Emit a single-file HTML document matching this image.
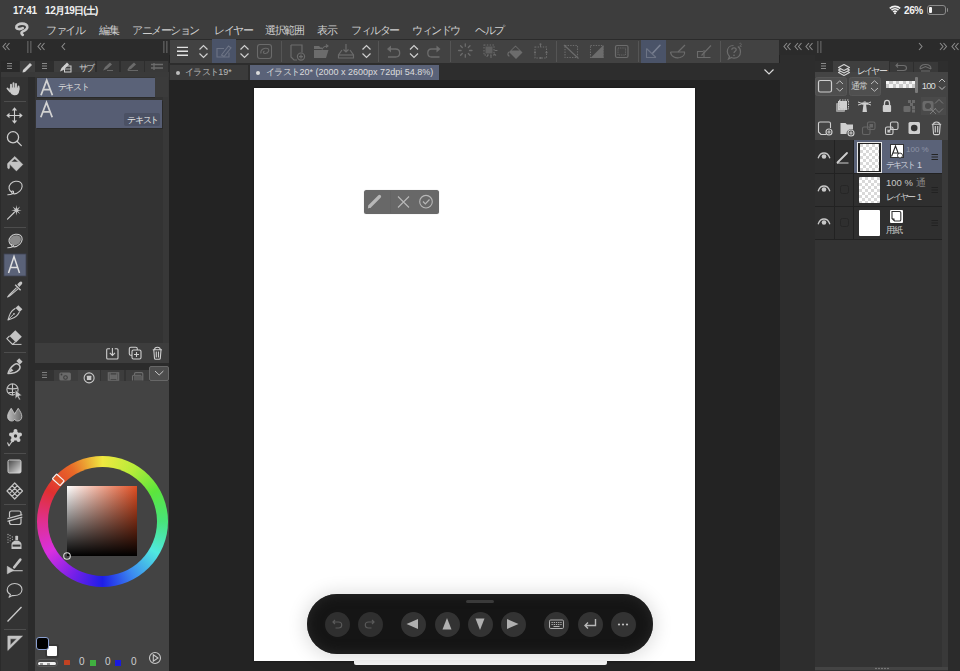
<!DOCTYPE html>
<html><head><meta charset="utf-8">
<style>
*{box-sizing:border-box;margin:0;padding:0}
html,body{width:960px;height:671px;overflow:hidden;background:#232323;font-family:"Liberation Sans",sans-serif;color:#d0d0d0}
.a{position:absolute}
svg{position:absolute;overflow:visible}
.t{position:absolute;white-space:nowrap;font-size:11px;line-height:12px}
.mn{position:absolute;top:24px;font-size:11px;line-height:12px;color:#cfcfcf;white-space:nowrap}
.sb{position:absolute;top:5px;font-size:10px;line-height:11px;font-weight:bold;color:#f2f2f2;white-space:nowrap;letter-spacing:-0.4px}
.jp{letter-spacing:0} i{display:inline-block;font-style:normal;text-align:center;letter-spacing:0}
.sep{position:absolute;top:41px;width:1px;height:21px;background:#555}
.tb{fill:none;stroke:#6c6c6c;stroke-width:1.2}
.ch{fill:none;stroke:#cfcfcf;stroke-width:1.2}
.tl{fill:none;stroke:#cccccc;stroke-width:1.3;stroke-linecap:round;stroke-linejoin:round}
.tf{fill:#cccccc}
</style></head><body>
<!-- ================= top status + menu ================= -->
<div class="a" style="left:0;top:0;width:960px;height:39px;background:#3d3d3d"></div>
<div class="sb" style="left:13px">17:41</div>
<div class="sb" style="left:45px">12<i style="width:8.8px">月</i>19<i style="width:8.8px">日</i>(<i style="width:8.8px">土</i>)</div>
<div class="sb" style="left:904px">26%</div>
<svg style="left:889px;top:5px" width="12" height="9" viewBox="0 0 12 9"><path d="M0.8 3.4 A7.6 7.6 0 0 1 11.2 3.4 M2.5 5.2 A5.1 5.1 0 0 1 9.5 5.2 M4.2 7 A2.6 2.6 0 0 1 7.8 7" fill="none" stroke="#f2f2f2" stroke-width="1.6"/><circle cx="6" cy="8.3" r="1" fill="#f2f2f2"/></svg>
<div class="a" style="left:927px;top:5px;width:19px;height:10px;border:1px solid #8a8a8a;border-radius:3px"></div>
<div class="a" style="left:929px;top:7px;width:3px;height:6px;background:#f5f5f5;border-radius:1px"></div>
<div class="a" style="left:946.5px;top:8px;width:1.5px;height:3.5px;background:#8a8a8a;border-radius:0 1px 1px 0"></div>
<svg style="left:0;top:0" width="40" height="40" viewBox="0 0 40 40"><path d="M22.8 28.2 C20 29.6 16.6 29.4 16.3 27.3 C16 25 19.3 23.6 22 23.6 C25.5 23.6 27.4 25.2 27.3 27.2 C27.2 29.5 24.3 30.8 22.2 31.8 C20.8 32.5 21.6 34 22.8 34.8" fill="none" stroke="#c8c8c8" stroke-width="2.6" stroke-linecap="round" stroke-linejoin="round"/></svg>
<div class="mn" style="left:46px"><i style="width:9.5px">フ</i><i style="width:9.5px">ァ</i><i style="width:9.5px">イ</i><i style="width:9.5px">ル</i></div>
<div class="mn" style="left:99px"><i style="width:9.5px">編</i><i style="width:9.5px">集</i></div>
<div class="mn" style="left:132px"><i style="width:9.5px">ア</i><i style="width:9.5px">ニ</i><i style="width:9.5px">メ</i><i style="width:9.5px">ー</i><i style="width:9.5px">シ</i><i style="width:9.5px">ョ</i><i style="width:9.5px">ン</i></div>
<div class="mn" style="left:214px"><i style="width:9.5px">レ</i><i style="width:9.5px">イ</i><i style="width:9.5px">ヤ</i><i style="width:9.5px">ー</i></div>
<div class="mn" style="left:265px"><i style="width:9.5px">選</i><i style="width:9.5px">択</i><i style="width:9.5px">範</i><i style="width:9.5px">囲</i></div>
<div class="mn" style="left:317px"><i style="width:9.5px">表</i><i style="width:9.5px">示</i></div>
<div class="mn" style="left:351px"><i style="width:9.5px">フ</i><i style="width:9.5px">ィ</i><i style="width:9.5px">ル</i><i style="width:9.5px">タ</i><i style="width:9.5px">ー</i></div>
<div class="mn" style="left:412px"><i style="width:9.5px">ウ</i><i style="width:9.5px">ィ</i><i style="width:9.5px">ン</i><i style="width:9.5px">ド</i><i style="width:9.5px">ウ</i></div>
<div class="mn" style="left:475px"><i style="width:9.5px">ヘ</i><i style="width:9.5px">ル</i><i style="width:9.5px">プ</i></div>

<!-- ================= collapse bar row ================= -->
<div class="a" style="left:0;top:39px;width:960px;height:16px;background:#2b2b2b"></div>
<svg style="left:0;top:39px" width="960" height="16" viewBox="0 0 960 16">
<g fill="none" stroke="#8a8a8a" stroke-width="1.1">
<path d="M6 4 L3 7.5 L6 11 M9.5 4 L6.5 7.5 L9.5 11"/>
<path d="M41 4 L38 7.5 L41 11 M44.5 4 L41.5 7.5 L44.5 11"/>
<path d="M65 4 L62 7.5 L65 11"/>
<path d="M787 4 L784 7.5 L787 11 M790.5 4 L787.5 7.5 L790.5 11"/>
<path d="M798 4 L795 7.5 L798 11 M801.5 4 L798.5 7.5 L801.5 11"/>
<path d="M809 4 L806 7.5 L809 11 M812.5 4 L809.5 7.5 L812.5 11"/>
<path d="M919 4 L922 7.5 L919 11"/>
<path d="M940 4 L943 7.5 L940 11 M943.5 4 L946.5 7.5 L943.5 11"/>
<path d="M955 4 L952 7.5 L955 11 M958.5 4 L955.5 7.5 L958.5 11"/>
</g>
<g fill="#555"><rect x="27" y="2" width="1.6" height="12"/><rect x="30" y="2" width="1.6" height="12"/>
<rect x="163" y="2" width="1.6" height="12"/><rect x="166" y="2" width="1.6" height="12"/>
<rect x="817" y="2" width="1.6" height="12"/><rect x="820" y="2" width="1.6" height="12"/></g>
</svg>
<!-- ================= toolbar ================= -->
<div class="a" style="left:170px;top:39.5px;width:609px;height:24px;background:#424242"></div>
<div class="a" style="left:212px;top:39px;width:24px;height:24px;background:#4a5368"></div>
<div class="a" style="left:641px;top:40px;width:25px;height:23px;background:#4a5368"></div>
<div class="sep" style="left:281px"></div>
<div class="sep" style="left:378px"></div>
<div class="sep" style="left:450px"></div>
<div class="sep" style="left:556px"></div>
<div class="sep" style="left:638px"></div>
<div class="sep" style="left:720px"></div>
<svg style="left:0;top:39px" width="780" height="24" viewBox="0 39 780 24">
<!-- hamburger -->
<g stroke="#e2e2e2" stroke-width="1.4"><path d="M177 47.4H188M177 51.2H188M177 55.2H188"/></g>
<!-- chevrons updown -->
<g class="ch">
<path d="M199.5 49.5 L203.5 45.5 L207.5 49.5 M199.5 53.5 L203.5 57.5 L207.5 53.5"/>
<path d="M240.5 49.5 L244.5 45.5 L248.5 49.5 M240.5 53.5 L244.5 57.5 L248.5 53.5"/>
<path d="M362.5 49.5 L366.5 45.5 L370.5 49.5 M362.5 53.5 L366.5 57.5 L370.5 53.5"/>
<path d="M410 49.5 L414 45.5 L418 49.5 M410 53.5 L414 57.5 L418 53.5"/>
</g>
<!-- highlighted pen-in-box icon -->
<g fill="none" stroke="#6d7485" stroke-width="1.1">
<path d="M224 48.5 H217 V57 H229 V52.5"/>
<path d="M221.5 55 L228.5 46 L231 47.8 L224 56.5 Z"/>
</g>
<!-- spiral -->
<g fill="none" stroke="#6a6a6a" stroke-width="1.1">
<rect x="257.5" y="44.5" width="14" height="14" rx="2.5"/>
<path d="M261 53.5 C260 50 264 47.5 267.5 48.5 C270 49.5 268.5 53 265.5 53.5 C263.5 53.8 262.5 52 264.5 51"/>
</g>
<!-- new doc -->
<g fill="none" stroke="#6c6c6c" stroke-width="1.2">
<path d="M291 45 H302 V52.5 M291 45 V57 L294 60 H297"/>
<circle cx="301" cy="56.6" r="3.6"/><path d="M299 56.6 H303 M301 54.6 V58.6"/>
</g>
<!-- folder -->
<g fill="#6c6c6c"><path d="M314 46 H319 L320.5 47.5 H322 V49 H314 Z"/><path d="M314 50 H328.5 L326 58 H314 Z"/></g>
<path d="M322 49.5 C323 47 325 46 327.5 46 M326 44.5 L328 46 L326 47.5" fill="none" stroke="#6c6c6c" stroke-width="1.1"/>
<!-- save tray -->
<g fill="none" stroke="#6c6c6c" stroke-width="1.2">
<path d="M342 50 L338.5 55 V58 H353.5 V55 L350 50"/><path d="M338.5 55 H353.5"/>
<path d="M346 44 V52 M343.5 49.5 L346 52 L348.5 49.5"/>
</g>
<!-- undo -->
<g fill="none" stroke="#6c6c6c" stroke-width="1.3">
<path d="M389 49 H395.5 C398 49 399.7 50.8 399.7 53 C399.7 55.2 398 57 395.5 57 H388"/>
</g>
<path d="M387 49 L391 45.5 V52.5 Z" fill="#6c6c6c"/>
<!-- redo -->
<g fill="none" stroke="#6c6c6c" stroke-width="1.3">
<path d="M438 49 H431.5 C429 49 427.8 50.8 427.8 53 C427.8 55.2 429 57 431.5 57 H439.5"/>
</g>
<path d="M440.5 49 L436.5 45.5 V52.5 Z" fill="#6c6c6c"/>
<!-- spinner -->
<g stroke="#6c6c6c" stroke-width="1.3" stroke-linecap="round">
<path d="M465.3 43.8V46.3M465.3 54.7V57.2M458.6 50.5H461.1M469.5 50.5H472M460.6 45.8L462.3 47.5M468.3 53.5L470 55.2M460.6 55.2L462.3 53.5M468.3 47.5L470 45.8"/>
</g>
<!-- dotted select -->
<g fill="none" stroke="#6c6c6c" stroke-width="1.1" stroke-dasharray="1.5 1.3">
<rect x="484" y="45" width="10" height="10"/>
</g>
<rect x="485.5" y="46.5" width="7" height="7" fill="#5f5f5f"/>
<g stroke="#6c6c6c" stroke-width="1.1" stroke-linecap="round"><path d="M495 50.5H497M494.2 54L495.7 55.2M491 55.5V57.5M487.8 55L487 56.5"/></g>
<!-- fill bucket -->
<path d="M509 52 L515.5 45.5 L522.5 52.5 L516 59 Z" fill="#6c6c6c"/>
<path d="M511.5 50.5 L515.5 46.8 L519.6 50.5 Z" fill="#424242"/>
<path d="M509 52 C507.5 53 507.5 56 509.5 56" fill="none" stroke="#6c6c6c" stroke-width="1.2"/>
<!-- transform -->
<g fill="none" stroke="#6c6c6c" stroke-width="1.1" stroke-dasharray="1.4 1.2"><rect x="535" y="47" width="11.5" height="11"/></g>
<g fill="#6c6c6c"><circle cx="540.5" cy="44.3" r="1"/><rect x="540" y="44.5" width="1" height="2.5"/><circle cx="535" cy="52.5" r="1.1"/><circle cx="546.5" cy="52.5" r="1.1"/><circle cx="540.7" cy="58" r="1.1"/></g>
<!-- dotted with slash -->
<g fill="none" stroke="#6c6c6c" stroke-width="1.1" stroke-dasharray="1.4 1.2"><rect x="565" y="45.5" width="12.5" height="12"/></g>
<path d="M564 45 L578.5 58.5" stroke="#6c6c6c" stroke-width="1.2"/>
<!-- dotted with triangle -->
<g fill="none" stroke="#6c6c6c" stroke-width="1.1" stroke-dasharray="1.4 1.2"><rect x="590.5" y="45.5" width="12.5" height="12"/></g>
<path d="M603.5 45 V58 H590.5 Z" fill="#6c6c6c"/>
<!-- frame -->
<rect x="615.5" y="45.5" width="12.5" height="12" rx="1.5" fill="none" stroke="#6c6c6c" stroke-width="1.2"/>
<rect x="618" y="48" width="7.5" height="7" fill="none" stroke="#6c6c6c" stroke-width="0.9" stroke-dasharray="1.2 1"/>
<!-- ruler highlighted -->
<g fill="none" stroke="#6d7485" stroke-width="1.1">
<path d="M646.5 48.5 V57.5 H656 M646.5 48.5 L656 57.5"/></g><path d="M652.8 53 L660 45.3" stroke="#7a8192" stroke-width="1.6" stroke-linecap="round"/>
<!-- ellipse ruler -->
<g fill="none" stroke="#6c6c6c" stroke-width="1.2"><path d="M670.5 52 C671 57 676 58.5 680 57.5 C683.5 56.5 685 54 684.5 52 H670.5"/><path d="M678 52 L685 45"/></g>
<!-- perspective ruler -->
<g fill="none" stroke="#6c6c6c" stroke-width="1.1"><path d="M697.5 51 V57.5 H710.5 M697.5 51.5 H703 M704 57.5 V50"/><path d="M701.5 55.5 L711 45.5"/></g>
<!-- help -->
<g fill="none" stroke="#6c6c6c" stroke-width="1.2">
<path d="M733.5 45.5 C729.5 45.5 727.3 48.3 727.3 51.5 C727.3 53.5 728 55 729.5 56.5 L728.5 59 L731.5 57.5 C732.5 58 733.5 58.2 734 58.2 C738 58.2 740.5 55.5 740.5 51.8 C740.5 49.5 739.5 47.5 737.8 46.5"/>
<path d="M731.8 49.8 C731.8 48.5 732.8 47.8 734 47.8 C735.3 47.8 736.2 48.6 736.2 49.7 C736.2 51.2 734 51.3 734 53"/>
</g>
<circle cx="734" cy="55.4" r="0.8" fill="#6c6c6c"/>
<path d="M739.5 43.5 C740.5 43 741.5 43.5 741.3 44.4 C741.2 45 740 45.3 739.8 46.3 H741.7" fill="none" stroke="#6c6c6c" stroke-width="0.8"/>
</svg>

<!-- ================= tabs row ================= -->
<div class="a" style="left:169px;top:63px;width:611px;height:17px;background:#2d2d2d"></div>
<div class="a" style="left:170px;top:65px;width:78px;height:15px;background:#3b3b3b"></div>
<div class="a" style="left:250px;top:65px;width:189px;height:15px;background:#5a6278"></div>
<div class="a" style="left:176px;top:71px;width:4px;height:4px;border-radius:50%;background:#bdbdbd"></div>
<div class="t" style="left:185px;top:67px;font-size:9px;line-height:10px;color:#b8b8b8"><span><i style="width:8.3px">イ</i><i style="width:8.3px">ラ</i><i style="width:8.3px">ス</i><i style="width:8.3px">ト</i></span>19*</div>
<div class="a" style="left:256px;top:71px;width:4px;height:4px;border-radius:50%;background:#dcdcdc"></div>
<div class="t" style="left:266px;top:67px;font-size:9px;line-height:10px;color:#dcdcdc"><span><i style="width:8.4px">イ</i><i style="width:8.4px">ラ</i><i style="width:8.4px">ス</i><i style="width:8.4px">ト</i></span>20* (2000 x 2600px 72dpi 54.8%)</div>
<svg style="left:764px;top:69px" width="10" height="6" viewBox="0 0 10 6"><path d="M0.5 0.5 L5 5 L9.5 0.5" fill="none" stroke="#d8d8d8" stroke-width="1.2"/></svg>

<!-- ================= canvas page ================= -->
<div class="a" style="left:254px;top:88.3px;width:441px;height:573px;background:#fff;box-shadow:0 0 2px rgba(0,0,0,0.45)"></div>
<!-- ================= left tool column ================= -->
<div class="a" style="left:0;top:55px;width:35px;height:616px;background:#2b2b2b"></div>
<div class="a" style="left:1px;top:61px;width:18px;height:11px;background:#292929"></div>
<div class="a" style="left:20px;top:61px;width:15px;height:11px;background:#3d3d3d"></div>
<div class="a" style="left:1px;top:72px;width:34px;height:5px;background:#393939"></div>
<div class="a" style="left:1px;top:77px;width:27px;height:594px;background:#333"></div>
<svg style="left:0;top:0" width="36" height="671" viewBox="0 0 36 671">
<g stroke="#8a8a8a" stroke-width="1"><path d="M7 63.5H12M7 66H12M7 68.5H12"/></g>
<path d="M23 70 L30 63 L32 65 L25 72 L22.5 72.5 Z" fill="#cfcfcf"/>
<!-- separators -->
<g fill="#4d4d4d"><rect x="4" y="101" width="22" height="1"/><rect x="4" y="227" width="22" height="1"/><rect x="4" y="352" width="22" height="1"/><rect x="4" y="453" width="22" height="1"/><rect x="4" y="504" width="22" height="1"/><rect x="4" y="629" width="22" height="1"/></g>
<!-- A highlight -->
<rect x="4" y="254" width="22" height="22" fill="#5a6278" stroke="#3f4454" stroke-width="0.8"/>
<g class="tf">
<!-- hand -->
<path d="M9.5 88.5 C9.5 90.5 10 94.5 14 95.3 C17.5 95.8 19 93.5 19.3 90.5 L19.5 87.5 L10 87.5 Z"/>
</g>
<g stroke="#c8c8c8" stroke-width="1.9" stroke-linecap="round" fill="none"><path d="M11 89 V84.8 M13.5 88 V83.3 M16 88 V84 M18.5 89.5 V86.5 M10 91.5 L7.5 88.5"/></g>
<path d="M14.8 156.5 L22.8 164.5 L16.4 170.9 L9.6 164.1 V167.5 C9.6 168.5 8.8 169 8.2 168.5 C7.6 168.1 7.6 167.3 7.6 166.5 V163.6 Z M14.8 158.7 L11 162 H18.5 Z" fill="#c4c4c4" fill-rule="evenodd" stroke="#c4c4c4" stroke-width="0.6" stroke-linejoin="round"/>
<g class="tl">
<!-- move -->
<path d="M14.5 108.5V122.5M7.5 115.5H21.5" stroke-width="1.1"/>
</g>
<g class="tf">
<path d="M14.5 107.3 L11.8 110.5 H17.2 Z M14.5 123.7 L11.8 120.5 H17.2 Z M6.3 115.5 L9.5 112.8 V118.2 Z M22.7 115.5 L19.5 112.8 V118.2 Z"/>
</g>
<g class="tl">
<!-- zoom -->
<circle cx="13" cy="137.3" r="5.6"/><path d="M17 141.3 L21.3 145.6"/>
<!-- lasso -->
<path d="M11.8 192.2 C8.6 190.6 8 186.5 10.8 183.6 C13.2 181.1 17.8 180.4 20.5 182.4 C23 184.4 22.6 188.6 19.8 191.1 C17.3 193.4 14 194.2 12.4 193.3 C11.2 192.6 11.6 190.9 12.8 191 C14 191.2 13.9 193 12.5 193.8 C11.2 194.6 9.3 194.8 7.8 194.8" stroke-width="1.1"/>
<!-- wand -->
<path d="M7.5 219.2 L14.2 212.5" stroke-width="1.1"/>
<path d="M16.40 205.00 L17.05 208.73 L20.15 206.55 L17.97 209.65 L21.70 210.30 L17.97 210.95 L20.15 214.05 L17.05 211.87 L16.40 215.60 L15.75 211.87 L12.65 214.05 L14.83 210.95 L11.10 210.30 L14.83 209.65 L12.65 206.55 L15.75 208.73 Z" fill="#c4c4c4" stroke="none"/>
<!-- lasso fill -->
<path d="M11.8 245.2 C8.6 243.6 8 239.5 10.8 236.6 C13.2 234.1 17.8 233.4 20.5 235.4 C23 237.4 22.6 241.6 19.8 244.1 C17.3 246.4 14 247.2 12.4 246.3 C11.2 245.6 11.6 243.9 12.8 244 C14 244.2 13.9 246 12.5 246.8 C11.2 247.6 9.3 247.8 7.8 247.8" stroke-width="1.1"/>
</g>
<path d="M12 244.3 C9.3 242.8 9 239.5 11.3 237.3 C13.5 235.2 17.5 234.6 19.6 236.3 C21.6 238 21.3 241.3 19 243.4 C17 245.2 14.5 245.5 13.2 244.9 Z" fill="#8a8a8a"/>
<!-- A text tool -->
<path d="M8.5 273 L14 256.5 L19.5 273 M10.5 267.5 H17.5" fill="none" stroke="#e0e0e0" stroke-width="1.5"/>
<!-- eyedropper -->
<path d="M17.3 284.3 L19.6 282 C20.5 281.1 21.9 281.3 22.2 282.5 C22.4 283.4 22 284.2 21.4 284.8 L19.2 287 Z" fill="#c4c4c4"/>
<path d="M15.2 284.8 L20.6 290.2" stroke="#c4c4c4" stroke-width="1.4"/>
<path d="M16.6 287.6 L10.2 294 C9.2 295 8.2 296.2 7.6 297 C8.6 296.6 10 295.6 11 294.8 L18 288.9" fill="none" stroke="#c4c4c4" stroke-width="1.1" stroke-linejoin="round"/>
<!-- pen -->
<path d="M18.3 305.2 L22.4 309.3 L19.6 312.1 L15.5 308 Z" fill="#c4c4c4"/>
<path d="M15.5 308.2 C12.4 310 10.3 312.8 9.3 315.8 L8 319.9 L12 318.6 C15 317.6 17.8 315.3 19.4 312" fill="none" stroke="#c4c4c4" stroke-width="1.1" stroke-linejoin="round"/>
<path d="M8.3 319.6 L13.5 314.3" stroke="#c4c4c4" stroke-width="1"/>
<circle cx="14" cy="313.8" r="0.9" fill="#c4c4c4"/>
<!-- eraser -->
<path d="M15.3 330.2 L21.8 336.7 L16 342.5 L9.5 336 Z" fill="#c4c4c4"/>
<path d="M9.5 336 L6.8 338.7 L12.6 344.5 L15.3 341.8" fill="none" stroke="#c4c4c4" stroke-width="1.1" stroke-linejoin="round"/>
<path d="M12.6 344.4 H21.5" stroke="#c4c4c4" stroke-width="1"/>
<!-- pen2 -->
<path d="M19.2 358.3 L22.6 361.7 L19.8 364.5 L16.4 361.1 Z" fill="#c4c4c4"/>
<path d="M8 373.6 C9 369.8 11.2 366.8 14 364.8 C15.6 363.7 17.3 363.6 18.3 364.3 L19.6 365.6 C20.3 366.6 20.1 368.3 19 369.8 C16.8 372.6 12.8 373.6 8 373.6 Z" fill="none" stroke="#c4c4c4" stroke-width="1.5" stroke-linejoin="round"/>
<path d="M8 373.6 L13.5 370.5 L11.2 368.5 Z" fill="#c4c4c4"/>
<!-- 3d cursor -->
<g fill="none" stroke="#c4c4c4" stroke-width="1.1">
<circle cx="12.5" cy="389.5" r="5.6"/>
<path d="M12.5 384 V395 M7.2 388 C9 389.2 16 389.2 17.8 388 M8.5 392.5 H15"/>
</g>
<path d="M15.2 389.8 L22 395.6 L18.9 396.1 L20.6 399.4 L19.1 400.1 L17.4 396.8 L15.2 398.9 Z" fill="#c4c4c4" stroke="#333" stroke-width="0.6"/>
<!-- drops -->
<defs><linearGradient id="gd" x1="0" y1="0" x2="1" y2="0"><stop offset="0" stop-color="#bdbdbd"/><stop offset="0.6" stop-color="#8a8a8a"/><stop offset="1" stop-color="#666"/></linearGradient></defs><path d="M11.2 408.3 C9.2 411.2 7.6 413.8 7.6 416.5 C7.6 419.3 9.5 421 11.7 421 C13.2 421 14.2 420.3 14.6 419.3 C15 420.3 16.2 421 17.7 421 C20 421 21.8 419.3 21.8 416.5 C21.8 413.8 20.2 411.2 18.2 408.3 C16.7 410.8 15.2 412.8 14.7 414.3 C14.2 412.8 12.7 410.8 11.2 408.3 Z" fill="url(#gd)" stroke="#c4c4c4" stroke-width="0.9"/>
<!-- flower -->
<circle cx="15.5" cy="436" r="4.5" fill="#cccccc"/>
<g fill="#cccccc"><circle cx="15.5" cy="431" r="2"/><circle cx="20" cy="434.5" r="2"/><circle cx="18.5" cy="440" r="2"/><circle cx="12.5" cy="440" r="2"/><circle cx="11" cy="434.5" r="2"/></g>
<circle cx="15.5" cy="436" r="1.7" fill="#333"/>
<path d="M9 446 L10.5 443.5 C11.5 441.5 13 441 14 440.5 M9 446 L7.5 442.5" fill="none" stroke="#cccccc" stroke-width="1.1"/>
<!-- gradient -->
<defs><linearGradient id="g1" x1="0" y1="0" x2="1" y2="1"><stop offset="0" stop-color="#444"/><stop offset="1" stop-color="#e0e0e0"/></linearGradient></defs>
<rect x="8" y="460" width="13" height="13" rx="1.5" fill="url(#g1)" stroke="#cccccc" stroke-width="1"/>
<!-- pattern -->
<path d="M14.7 483 L22.5 491 L14.7 499 L7 491 Z M9.57 488.33 L17.30 496.33 M12.13 496.33 L19.90 488.33 M12.13 485.67 L19.90 493.67 M9.57 493.67 L17.30 485.67" fill="none" stroke="#c4c4c4" stroke-width="1.2" stroke-linejoin="round"/>
<!-- frame -->
<g fill="none" stroke="#c4c4c4" stroke-width="1.2">
<path d="M9.5 517 V513 C9.5 511.9 10.4 511 11.5 511 H19 C20.1 511 21 511.9 21 513 V515.2"/>
<path d="M9.5 520 V522.5 C9.5 523.6 10.4 524.5 11.5 524.5 H19 C20.1 524.5 21 523.6 21 522.5 V518.3"/>
<path d="M7.5 518.7 L22.3 514.6 M7.5 521.3 L22.3 517.2"/>
</g>
<!-- spray -->
<path d="M11.5 549 V544.8 C11.5 542.3 13.8 540.6 16.5 540.6 C19.2 540.6 21.5 542.3 21.5 544.8 V549 Z" fill="#c4c4c4"/>
<rect x="12.6" y="544.6" width="7.8" height="2" fill="#333"/>
<rect x="15.3" y="535.8" width="2.8" height="4.2" rx="0.6" fill="#c4c4c4"/>
<g fill="#a8a8a8"><circle cx="8" cy="534.5" r="0.65"/><circle cx="10" cy="535.5" r="0.65"/><circle cx="12.3" cy="537" r="0.65"/><circle cx="8" cy="537.2" r="0.65"/><circle cx="10.2" cy="538.3" r="0.65"/><circle cx="12.5" cy="539.3" r="0.65"/><circle cx="8" cy="539.8" r="0.65"/><circle cx="10.2" cy="540.8" r="0.65"/><circle cx="8" cy="542.3" r="0.65"/></g>
<!-- brush -->
<path d="M14.2 567.3 L20.3 559.6" stroke="#c4c4c4" stroke-width="2.6" stroke-linecap="round"/>
<path d="M7.3 566.3 L13.8 570.2 L7.3 573.8 Z" fill="#c4c4c4" stroke="#c4c4c4" stroke-width="0.6" stroke-linejoin="round"/>
<path d="M11 570.7 H22.7" stroke="#c4c4c4" stroke-width="1.1"/>
<!-- bubble -->
<path d="M10.5 594.6 C7.8 593.3 7.2 591.3 7.2 589.8 C7.2 586.2 10.5 583.5 14.7 583.5 C18.9 583.5 22 586.2 22 589.6 C22 593 18.9 595.5 14.7 595.5 L12.3 595.6 L9 597.2 Z" fill="none" stroke="#c4c4c4" stroke-width="1.1" stroke-linejoin="round"/>
<!-- line -->
<path d="M7.5 621.5 L21.5 607" stroke="#cccccc" stroke-width="1.3"/>
<!-- triangle ruler -->
<path d="M7.8 636 H22.5 L7.8 650.5 Z M10.3 638.8 V645.2 L16.8 638.8 Z" fill="#c4c4c4" fill-rule="evenodd" stroke="#c4c4c4" stroke-width="0.5" stroke-linejoin="round"/>
</svg>
<!-- ================= sub tool panel ================= -->
<div class="a" style="left:35px;top:55px;width:134px;height:308px;background:#333333"></div>
<div class="a" style="left:35px;top:55px;width:134px;height:6px;background:#2b2b2b"></div>
<div class="a" style="left:35px;top:61px;width:134px;height:11px;background:#2e2e2e"></div>
<div class="a" style="left:54px;top:61px;width:41px;height:12px;background:#3e3e3e"></div>
<div class="a" style="left:97px;top:61px;width:22px;height:10.5px;background:#393939"></div>
<div class="a" style="left:121px;top:61px;width:23px;height:10.5px;background:#393939"></div>
<div class="a" style="left:145px;top:61px;width:23px;height:10.5px;background:#393939"></div>
<div class="a" style="left:35px;top:72px;width:134px;height:5px;background:#3a3a3a"></div>
<div class="a" style="left:163px;top:77px;width:6px;height:266px;background:#383838"></div>
<!-- item 1 -->
<div class="a" style="left:155px;top:77px;width:13px;height:20px;background:#3b3b3b"></div>
<div class="a" style="left:37px;top:78px;width:118px;height:19px;background:#5a6278;box-shadow:0 1px 0 #2a2a2a"></div>
<svg style="left:0;top:0" width="170" height="380" viewBox="0 0 170 380">
<g stroke="#8a8a8a" stroke-width="1"><path d="M42 63.5H47M42 66H47M42 68.5H47"/></g>
<!-- sub tab icon -->
<path d="M60 71.5 L61.5 68 L67 62.5 L69 64.5 L63.5 70 Z" fill="#cfcfcf"/>
<rect x="64.5" y="66" width="6.5" height="6" fill="none" stroke="#cfcfcf" stroke-width="1"/>
<path d="M64.5 69 H71" stroke="#cfcfcf" stroke-width="0.8"/>
<g fill="#6b6b6b">
<path d="M103 70.5 L105 67 L110 62.5 L112 64.5 L107 69 Z"/><path d="M107 70.5 H113" stroke="#6b6b6b" stroke-width="0.9"/>
<path d="M127 70.5 L129 67 L134 62.5 L136 64.5 L131 69 Z"/><path d="M128 70.5 H138" stroke="#6b6b6b" stroke-width="0.9"/>
</g>
<g stroke="#6b6b6b" stroke-width="1.3" fill="none"><path d="M151 64.5 H163 M151 68 H163 M154 63 V70"/></g>
<!-- big A 1 -->
<path d="M41 95.2 L46.7 80.3 L52.4 95.2 M43.1 89.7 H50.3" fill="none" stroke="#d2d2d2" stroke-width="1.75"/>
</svg>
<div class="t" style="left:57.5px;top:82px;font-size:9px;line-height:10px;color:#dedede"><i style="width:7.8px">テ</i><i style="width:7.8px">キ</i><i style="width:7.8px">ス</i><i style="width:7.8px">ト</i></div>
<div class="t" style="left:79px;top:63px;font-size:9px;line-height:10px;color:#cfcfcf"><i style="width:7.3px">サ</i><i style="width:7.3px">ブ</i></div>
<!-- item 2 -->
<div class="a" style="left:36px;top:100px;width:126px;height:28px;background:#565d73;box-shadow:1px 1px 0 #2a2a2a"></div>
<svg style="left:0;top:0" width="170" height="130" viewBox="0 0 170 130"><path d="M40.8 117.3 L46.5 102.5 L52.2 117.3 M42.9 111.8 H50.1" fill="none" stroke="#d2d2d2" stroke-width="1.75"/></svg>
<div class="a" style="left:124px;top:113px;width:36px;height:13px;background:#4b5164;border-radius:2px"></div>
<div class="t" style="left:127px;top:115px;font-size:9px;line-height:10px;color:#e6e6e6"><i style="width:7.8px">テ</i><i style="width:7.8px">キ</i><i style="width:7.8px">ス</i><i style="width:7.8px">ト</i></div>
<!-- bottom bar -->
<div class="a" style="left:35px;top:343px;width:134px;height:20px;background:#3d3d3d"></div>
<svg style="left:0;top:0" width="170" height="380" viewBox="0 0 170 380">
<g fill="none" stroke="#cfcfcf" stroke-width="1.1">
<path d="M110 348.7 H107.7 C107 348.7 106.7 349 106.7 349.7 V358 C106.7 358.7 107 359 107.7 359 H117 C117.7 359 118 358.7 118 358 V349.7 C118 349 117.7 348.7 117 348.7 H114.7"/>
<path d="M112.4 348 V355.5 M109.8 352.8 L112.4 355.5 L115 352.8"/>
<rect x="129.3" y="347.3" width="8" height="8" rx="1.5"/>
<rect x="132" y="350" width="9" height="9" rx="1.5" fill="#3d3d3d"/>
<path d="M136.5 352 V357 M134 354.5 H139"/>
<path d="M152.8 349.8 H162 M154.5 349.8 C154.5 348 155.5 347.3 157.4 347.3 C159.3 347.3 160.3 348 160.3 349.8 M153.8 350 L154.5 358.3 C154.6 358.9 155 359.2 155.6 359.2 H159.2 C159.8 359.2 160.2 358.9 160.3 358.3 L161 350 M156.3 351.5 V357.5 M158.5 351.5 V357.5"/>
</g>
</svg>

<!-- ================= color panel ================= -->
<div class="a" style="left:35px;top:363px;width:134px;height:7px;background:#2b2b2b"></div>
<div class="a" style="left:35px;top:370px;width:134px;height:301px;background:#434343"></div>
<div class="a" style="left:35px;top:370px;width:134px;height:11px;background:#333333"></div>
<div class="a" style="left:54px;top:370px;width:23.8px;height:11px;background:#3d3d3d"></div>
<div class="a" style="left:78px;top:370px;width:22px;height:11px;background:#434343"></div>
<div class="a" style="left:101px;top:370px;width:23px;height:11px;background:#3d3d3d"></div>
<div class="a" style="left:126px;top:370px;width:23px;height:11px;background:#3d3d3d"></div>
<div class="a" style="left:149.4px;top:366px;width:19.3px;height:14.7px;background:#4d4d4d;border:1px solid #676767;border-radius:2px"></div>
<svg style="left:0;top:0" width="170" height="671" viewBox="0 0 170 671">
<g stroke="#808080" stroke-width="1"><path d="M42 372.5H47M42 375H47M42 377.5H47"/></g>
<!-- tab icons -->
<g fill="none" stroke="#6e6e6e" stroke-width="1.1">
<rect x="59.3" y="372.5" width="11.6" height="8" rx="1.5" fill="#6a6a6a" stroke="none"/><circle cx="65.5" cy="377.5" r="1.8" stroke="#3d3d3d"/><circle cx="61.5" cy="374.5" r="0.9" fill="#3d3d3d" stroke="none"/>
<rect x="110" y="374.5" width="7" height="4.5" fill="#666" stroke="none"/><path d="M108.3 372.8 H118.7 V380.3 H108.3 Z M110 372.8 V380.3 M117 372.8 V380.3"/>
<rect x="134" y="375.5" width="8.5" height="5" fill="#5a5a5a" stroke="none"/><path d="M132.5 380.5 V376.5 C132.5 375.8 133 375.3 133.7 375.3 H141 M134.5 375.3 V373.8 C134.5 373 135 372.6 135.8 372.6 H141.5 C142.3 372.6 142.8 373 142.8 373.8 V380.5"/>
</g>
<circle cx="89.1" cy="377.9" r="5" fill="none" stroke="#c8c8c8" stroke-width="1.1"/>
<rect x="86.9" y="375.7" width="4.4" height="4.4" rx="0.5" fill="#c8c8c8"/>
<path d="M155 371 L159.2 375 L163.4 371" fill="none" stroke="#c8c8c8" stroke-width="1"/>
</svg>
<!-- color wheel -->
<div class="a" style="left:36.5px;top:455.5px;width:131px;height:131px;border-radius:50%;background:conic-gradient(from 0deg,#f0e840 0deg,#b8ec3a 30deg,#5ce43c 60deg,#48e47a 90deg,#50e8e0 120deg,#3c8cf0 150deg,#1e1ee8 180deg,#7a20e8 210deg,#d830e0 240deg,#e03090 270deg,#e03030 300deg,#e86a28 330deg,#f0e840 360deg)"></div>
<div class="a" style="left:47.5px;top:466.5px;width:109px;height:109px;border-radius:50%;background:#434343"></div>
<div class="a" style="left:67px;top:486px;width:70px;height:70px;background:linear-gradient(to bottom,rgba(0,0,0,0),#000),linear-gradient(to right,#fff,#e04e22)"></div>
<svg style="left:0;top:0" width="170" height="671" viewBox="0 0 170 671">
<circle cx="67" cy="556" r="3.3" fill="none" stroke="#d8d8d8" stroke-width="1.1"/>
<g transform="translate(58.3 479.8) rotate(-48)"><rect x="-3.2" y="-5.2" width="6.4" height="10.4" rx="0.8" fill="#e0552a" stroke="#f4f4f4" stroke-width="1.2"/></g>
</svg>
<!-- bottom swatches -->
<div class="a" style="left:44.5px;top:643.7px;width:14px;height:14px;background:#fff;border:2px solid #393939;border-radius:3px"></div>
<div class="a" style="left:36.2px;top:636.7px;width:13px;height:13.3px;background:#000;border:1.7px solid #8a9fd0;border-radius:3px"></div>
<div class="a" style="left:35.8px;top:659.2px;width:22.5px;height:8.3px;border:1px solid #5a5a5a;border-radius:4px;background:#434343"></div>
<div class="a" style="left:38px;top:661.8px;width:17.5px;height:3.6px;background:#f0f0f0;border-radius:1.5px"></div>
<div class="a" style="left:40px;top:662.6px;width:3px;height:2px;background:#9a9a9a"></div>
<div class="a" style="left:47px;top:662.6px;width:3px;height:2px;background:#9a9a9a"></div>
<div class="a" style="left:64.2px;top:659.6px;width:5.4px;height:5.2px;background:#c24222;border-radius:0.5px"></div>
<div class="a" style="left:90px;top:659.5px;width:6px;height:6px;background:#40b040"></div>
<div class="a" style="left:115px;top:659.5px;width:6px;height:6px;background:#1a1ae0"></div>
<div class="t" style="left:79px;top:657px;font-size:10px;line-height:10px;color:#cfcfcf">0</div>
<div class="t" style="left:105px;top:657px;font-size:10px;line-height:10px;color:#cfcfcf">0</div>
<div class="t" style="left:131px;top:657px;font-size:10px;line-height:10px;color:#cfcfcf">0</div>
<svg style="left:149px;top:652px" width="12" height="12" viewBox="0 0 12 12"><circle cx="6" cy="6" r="5.5" fill="none" stroke="#c8c8c8" stroke-width="1.1"/><path d="M4.3 2.8 L9 6 L4.3 9.2 Z" fill="none" stroke="#c8c8c8" stroke-width="1.1"/></svg>
<!-- ================= right collapse column + layer panel ================= -->
<div class="a" style="left:780px;top:55px;width:35px;height:616px;background:#2d2d2d"></div>
<div class="a" style="left:948px;top:55px;width:12px;height:616px;background:#2b2b2b"></div>
<div class="a" style="left:815px;top:55px;width:133px;height:6px;background:#2b2b2b"></div>
<div class="a" style="left:815px;top:61px;width:133px;height:11px;background:#2e2e2e"></div>
<div class="a" style="left:833px;top:61px;width:56px;height:12px;background:#3f3f3f"></div>
<div class="a" style="left:890px;top:61.5px;width:23px;height:10px;background:#393939"></div>
<div class="a" style="left:914px;top:61.5px;width:23.5px;height:10px;background:#393939"></div>
<div class="a" style="left:815px;top:72px;width:133px;height:68px;background:#444444"></div>
<div class="a" style="left:815px;top:76.5px;width:32px;height:19px;background:#4f4f4f;border:1px solid #565656;border-radius:2.5px"></div>
<div class="a" style="left:849px;top:76.5px;width:32px;height:19px;background:#4f4f4f;border:1px solid #565656;border-radius:2.5px"></div>
<div class="a" style="left:921px;top:97px;width:25px;height:18px;background:#4a4a4a"></div>
<div class="a" style="left:886px;top:81px;width:28.5px;height:6.5px;background:linear-gradient(#fff,#fff) 0 0/100% 0,repeating-linear-gradient(90deg,#f4f4f4 0 3.3px,#c9c9c9 3.3px 6.6px)"></div>
<div class="a" style="left:886px;top:84.25px;width:28.5px;height:3.25px;background:repeating-linear-gradient(90deg,#c9c9c9 0 3.3px,#f4f4f4 3.3px 6.6px)"></div>
<div class="a" style="left:914.5px;top:76.5px;width:3.5px;height:16px;background:#7a7a7a;border-radius:1px"></div>
<div class="t" style="left:921.8px;top:80.5px;font-size:9.5px;line-height:10px;color:#dcdcdc;letter-spacing:-0.9px">100</div>
<div class="t" style="left:856.5px;top:66px;font-size:9px;line-height:10px;color:#dadada"><i style="width:7.4px">レ</i><i style="width:7.4px">イ</i><i style="width:7.4px">ヤ</i><i style="width:7.4px">ー</i></div>
<div class="t" style="left:851px;top:81px;font-size:9px;line-height:10px;color:#cfcfcf"><i style="width:7.7px">通</i><i style="width:7.7px">常</i></div>
<svg style="left:0;top:0" width="960" height="671" viewBox="0 0 960 671">
<g stroke="#8a8a8a" stroke-width="1"><path d="M821 63.5H826M821 66H826M821 68.5H826"/></g>
<!-- layers icon -->
<g fill="#3f3f3f" stroke="#d4d4d4" stroke-width="1.1" stroke-linejoin="round">
<path d="M838.5 72.5 L844 75.5 L849.5 72.5 L844 69.5 Z"/>
<path d="M838.5 70 L844 73 L849.5 70 L844 67 Z"/>
<path d="M838.5 67.5 L844 70.5 L849.5 67.5 L844 64.5 Z"/>
</g>
<g fill="none" stroke="#6e6e6e" stroke-width="1.1">
<path d="M896 65.5 H903.5 C905.5 65.5 906.5 66.7 906.5 68 C906.5 69.3 905.5 70.5 903.5 70.5 H897 M898 63.5 L896 65.5 L898 67.5"/>
<path d="M920 69 C920 66 922.5 64.5 925.5 64.5 C928.5 64.5 931 66 931 69 M920 69 L925.5 66.5 L931 69 M921 71 H930"/>
</g>
<!-- prop row1 -->
<rect x="818.5" y="80.5" width="13" height="11.5" rx="1.8" fill="none" stroke="#cfcfcf" stroke-width="1.2"/>
<g fill="none" stroke="#bdbdbd" stroke-width="1">
<path d="M836.5 84 L839.7 80.8 L843 84 M836.5 88 L839.7 91.2 L843 88"/>
<path d="M871 84 L874.5 80.8 L878 84 M871 88 L874.5 91.2 L878 88"/>
<path d="M939 82 L942 79 L945 82 M939 86.5 L942 89.5 L945 86.5"/>
</g>
<!-- row2 icons -->
<g fill="#9a9a9a"><rect x="836" y="103" width="9" height="9" rx="1"/></g>
<rect x="838" y="101" width="9" height="9" fill="#cfcfcf"/>
<rect x="839.5" y="100" width="9" height="9" fill="none" stroke="#bdbdbd" stroke-width="1" stroke-dasharray="1.5 1"/>
<g fill="#cfcfcf">
<path d="M862.5 112 L863.5 104 H866 L867 112 Z"/><rect x="861.5" y="102.5" width="6.5" height="2.2"/><path d="M863 102.5 C863 101 866.5 101 866.5 102.5 Z"/>
<path d="M858 102 L862 103.5 M871 102 L867.5 103.5 M858 105 L861.5 104 M871 105 L868 104" stroke="#cfcfcf" stroke-width="1"/>
<rect x="882.8" y="105" width="8.3" height="7" rx="1"/>
</g>
<path d="M884.5 105 V103 C884.5 101.3 885.5 100.3 887 100.3 C888.5 100.3 889.5 101.3 889.5 103 V105" fill="none" stroke="#cfcfcf" stroke-width="1.3"/>
<g fill="#6a6a6a"><rect x="903.5" y="106" width="7" height="6" rx="1"/><rect x="908" y="100" width="3" height="3"/><rect x="912" y="100" width="3" height="3"/><rect x="910" y="103" width="3" height="3"/><rect x="912" y="106" width="3" height="3"/><rect x="912" y="109.5" width="3" height="3"/></g>
<g><rect x="922.5" y="101" width="11" height="10" rx="2" fill="#6a6a6a"/><circle cx="928" cy="106" r="3" fill="#4a4a4a"/></g>
<g fill="none" stroke="#7a7a7a" stroke-width="1"><path d="M935 103.5 L939 99.5 L943 103.5 M935 108.5 L939 112.5 L943 108.5 M930 108 L936 114 M936 108 L930 114"/></g>
<!-- row3 icons -->
<g fill="none" stroke="#cfcfcf" stroke-width="1.1">
<path d="M830.5 128 V123.5 C830.5 122.5 830 122 829 122 H820 C819 122 818.5 122.5 818.5 123.5 V132 L821 134.5 H826"/>
<circle cx="829" cy="132" r="3"/><path d="M827.3 132 H830.7 M829 130.3 V133.7"/>
</g>
<path d="M840.5 123 H845.5 L847 124.5 H853 V129.5 C852.5 129.3 852 129.2 851 129.2 C848.5 129.2 846.5 131 846.5 133.5 V134 H840.5 Z" fill="#cfcfcf"/>
<g fill="none" stroke="#cfcfcf" stroke-width="1.1"><circle cx="851" cy="133" r="3"/><path d="M849.3 133 H852.7 M851 131.3 V134.7"/></g>
<g fill="none" stroke="#666" stroke-width="1.1"><rect x="862.5" y="127" width="7.5" height="7.5" rx="1.5"/><rect x="867.5" y="122" width="7.5" height="7.5" rx="1.5"/><rect x="869.5" y="124" width="3.5" height="3.5" fill="#666" stroke="none"/></g>
<g fill="none" stroke="#cfcfcf" stroke-width="1.1"><rect x="885.5" y="127" width="7.5" height="7.5" rx="1.5"/><rect x="890.5" y="122" width="7.5" height="7.5" rx="1.5"/><path d="M888 132 L891.5 128.5 M888 129.5 V132 H890.5"/></g>
<rect x="908.5" y="122" width="11.5" height="12" rx="1.5" fill="#cfcfcf"/>
<circle cx="914.2" cy="128" r="3.3" fill="#333"/>
<g fill="none" stroke="#cfcfcf" stroke-width="1.1"><path d="M931.8 124.3 H941.2 M933.5 124.3 C933.5 122.8 934.5 122 936.5 122 C938.5 122 939.5 122.8 939.5 124.3 M932.8 124.5 L933.5 133.5 C933.6 134.2 934 134.6 934.7 134.6 H938.3 C939 134.6 939.4 134.2 939.5 133.5 L940.2 124.5 M935.3 126 V132.5 M937.7 126 V132.5"/></g>
</svg>
<!-- layer list -->
<div class="a" style="left:815px;top:140px;width:133px;height:531px;background:#333333"></div>
<div class="a" style="left:942px;top:140px;width:6px;height:527px;background:#393939"></div>
<div class="a" style="left:815px;top:140px;width:127px;height:99.5px;background:#2f2f2f"></div>
<div class="a" style="left:854px;top:140px;width:88px;height:33px;background:#5a6278"></div>
<div class="a" style="left:815px;top:173px;width:127px;height:1px;background:#222"></div>
<div class="a" style="left:815px;top:206px;width:127px;height:1px;background:#222"></div>
<div class="a" style="left:815px;top:238.5px;width:127px;height:1px;background:#222"></div>
<div class="a" style="left:834px;top:140px;width:1px;height:99px;background:#222"></div>
<div class="a" style="left:853px;top:140px;width:1px;height:99px;background:#222"></div>
<div class="a" style="left:815px;top:667px;width:133px;height:3px;background:#444"></div>
<!-- thumbs -->
<div class="a" style="left:857px;top:141.5px;width:24.5px;height:31px;border:1.2px solid #e8e8e8;background:#222"></div>
<div class="a" style="left:859.5px;top:143.5px;width:19.5px;height:27px;background:repeating-conic-gradient(#ffffff 0 25%,#d8d8d8 0 50%) 0 0/6px 6px"></div>
<div class="a" style="left:859px;top:176.5px;width:20.5px;height:26.5px;background:repeating-conic-gradient(#ffffff 0 25%,#d8d8d8 0 50%) 0 0/6px 6px;border-radius:1px"></div>
<div class="a" style="left:859px;top:209.5px;width:20.5px;height:26px;background:#fff;border-radius:1px"></div>
<div class="a" style="left:889.5px;top:144px;width:14px;height:14px;background:#fff;border:1px solid #333"></div>
<div class="a" style="left:889.5px;top:209.5px;width:13.5px;height:13.5px;background:#fff;border-radius:1px"></div>
<svg style="left:0;top:0" width="960" height="671" viewBox="0 0 960 671">
<path d="M891.5 156.5 L895.5 146 L899.5 156.5 M892.8 153 H898.2" fill="none" stroke="#222" stroke-width="1.1"/>
<circle cx="900" cy="155.5" r="2.5" fill="#fff" stroke="#222" stroke-width="0.9"/>
<path d="M892 211.5 H899.5 C900.3 211.5 900.8 212 900.8 212.8 V219.7 C900.8 220.5 900.3 221 899.5 221 H894.5 L892 218.5 Z" fill="none" stroke="#333" stroke-width="1.1"/>
<path d="M892 218.5 H894.5 V221 Z" fill="#333"/>
<!-- eyes -->
<g fill="none" stroke="#c8c8c8" stroke-width="1.3" stroke-linecap="round"><path d="M818.3 157.8 C819.5 154.3 821.5 153.0 824 153.0 C826.5 153.0 828.5 154.3 829.7 157.8"/><path d="M818.3 190.8 C819.5 187.3 821.5 186.0 824 186.0 C826.5 186.0 828.5 187.3 829.7 190.8"/><path d="M818.3 223.8 C819.5 220.3 821.5 219.0 824 219.0 C826.5 219.0 828.5 220.3 829.7 223.8"/></g>
<g fill="#c8c8c8"><circle cx="824" cy="156.5" r="2.3"/><circle cx="824" cy="189.5" r="2.3"/><circle cx="824" cy="222.5" r="2.3"/></g>
<!-- pen -->
<path d="M837.5 162.5 L847 153" stroke="#cfcfcf" stroke-width="1.8" stroke-linecap="round"/>
<path d="M837 163 H848.5" stroke="#cfcfcf" stroke-width="1"/>
<rect x="840.5" y="185.5" width="8" height="8" rx="2" fill="none" stroke="#262626" stroke-width="1"/>
<rect x="840.5" y="218.5" width="8" height="8" rx="2" fill="none" stroke="#262626" stroke-width="1"/>
<!-- handles -->
<g stroke="#242424" stroke-width="1"><path d="M931.5 154.5H938M931.5 157H938M931.5 159.5H938"/></g>
<g stroke="#222" stroke-width="1"><path d="M931.5 187.5H938M931.5 190H938M931.5 192.5H938M931.5 220.5H938M931.5 223H938M931.5 225.5H938"/></g>
<g fill="#8a8a8a"><circle cx="876" cy="668.5" r="0.8"/><circle cx="879" cy="668.5" r="0.8"/><circle cx="882" cy="668.5" r="0.8"/><circle cx="885" cy="668.5" r="0.8"/><circle cx="888" cy="668.5" r="0.8"/></g>
</svg>
<div class="t" style="left:906px;top:145px;font-size:8px;line-height:9px;color:#8e94a6">100 %</div>
<div class="t" style="left:886px;top:160px;font-size:9px;line-height:10px;color:#cdd0da"><i style="width:7.1px">テ</i><i style="width:7.1px">キ</i><i style="width:7.1px">ス</i><i style="width:7.1px">ト</i> 1</div>
<div class="t" style="left:886px;top:178px;font-size:9.5px;line-height:10px;color:#c8c8c8">100 % <span style="color:#8a8a8a"><i style="width:7.5px">通</i></span></div>
<div class="t" style="left:886px;top:192px;font-size:9px;line-height:10px;color:#c8c8c8"><i style="width:7.1px">レ</i><i style="width:7.1px">イ</i><i style="width:7.1px">ヤ</i><i style="width:7.1px">ー</i> 1</div>
<div class="t" style="left:886px;top:225px;font-size:9px;line-height:10px;color:#c8c8c8"><i style="width:7.8px">用</i><i style="width:7.8px">紙</i></div>
<!-- ================= floating text popup ================= -->
<div class="a" style="left:363.5px;top:190px;width:75.5px;height:24px;background:#686868;border-radius:2.5px;box-shadow:0 0 1px rgba(0,0,0,0.3)"></div>
<div class="a" style="left:389.5px;top:191px;width:1px;height:22px;background:#646464"></div>
<svg style="left:0;top:0" width="960" height="671" viewBox="0 0 960 671">
<path d="M370 206 L379.5 196.5" stroke="#b8b8b8" stroke-width="3.2" stroke-linecap="round"/>
<path d="M367.8 208.5 L368.5 205 L371 207.5 Z" fill="#b8b8b8"/>
<path d="M398 196.5 L409 207.5 M409 196.5 L398 207.5" stroke="#b8b8b8" stroke-width="1.1"/>
<circle cx="426" cy="201.7" r="6.3" fill="none" stroke="#b8b8b8" stroke-width="1.1"/>
<path d="M423 201.5 L425.3 203.8 L429.5 199.5" fill="none" stroke="#b8b8b8" stroke-width="1.2"/>
</svg>

<!-- ================= bottom keyboard accessory bar ================= -->
<div class="a" style="left:353.5px;top:660px;width:253px;height:5px;background:#f8f8f8;border-radius:0 0 2px 2px"></div>
<div class="a" style="left:307px;top:594px;width:346px;height:60px;border-radius:30px;background:#151515;box-shadow:inset 0 0 12px 1px #262626,0 1px 18px 3px rgba(0,0,0,0.13)"></div>
<div class="a" style="left:466px;top:599.5px;width:28px;height:3.5px;border-radius:2px;background:#3a3a3a"></div>
<div class="a" style="left:324.5px;top:611.5px;width:25px;height:25px;border-radius:50%;background:#2f2f2f"></div>
<div class="a" style="left:357.5px;top:611.5px;width:25px;height:25px;border-radius:50%;background:#2f2f2f"></div>
<div class="a" style="left:400.5px;top:611.5px;width:25px;height:25px;border-radius:50%;background:#333"></div>
<div class="a" style="left:434.5px;top:611.5px;width:25px;height:25px;border-radius:50%;background:#333"></div>
<div class="a" style="left:467.5px;top:611.5px;width:25px;height:25px;border-radius:50%;background:#333"></div>
<div class="a" style="left:500.5px;top:611.5px;width:25px;height:25px;border-radius:50%;background:#333"></div>
<div class="a" style="left:544px;top:611.5px;width:25px;height:25px;border-radius:50%;background:#333"></div>
<div class="a" style="left:577.5px;top:611.5px;width:25px;height:25px;border-radius:50%;background:#333"></div>
<div class="a" style="left:610.5px;top:611.5px;width:25px;height:25px;border-radius:50%;background:#333"></div>
<svg style="left:0;top:0" width="960" height="671" viewBox="0 0 960 671">
<g fill="none" stroke="#5a5a5a" stroke-width="1.2">
<path d="M333 622 H338.5 C340.5 622 341.7 623.3 341.7 625 C341.7 626.7 340.5 628 338.5 628 H335.5 M335 620 L333 622 L335 624"/>
<path d="M374 622 H368.5 C366.5 622 365.3 623.3 365.3 625 C365.3 626.7 366.5 628 368.5 628 H371.5 M372 620 L374 622 L372 624"/>
</g>
<g fill="#b0b0b0">
<path d="M406.5 624 L418 619 V629 Z"/>
<path d="M447 618 L451.5 629.5 H442.5 Z"/>
<path d="M480 630 L484.5 618.5 H475.5 Z"/>
<path d="M518.5 624 L507 619 V629 Z"/>
</g>
<g fill="none" stroke="#b0b0b0" stroke-width="1">
<rect x="549.5" y="620" width="14" height="8.5" rx="1.2"/>
</g>
<g fill="#b0b0b0"><rect x="551.5" y="622" width="1.3" height="1"/><rect x="553.7" y="622" width="1.3" height="1"/><rect x="555.9" y="622" width="1.3" height="1"/><rect x="558.1" y="622" width="1.3" height="1"/><rect x="560.3" y="622" width="1.3" height="1"/><rect x="551.5" y="624" width="1.3" height="1"/><rect x="553.7" y="624" width="1.3" height="1"/><rect x="555.9" y="624" width="1.3" height="1"/><rect x="558.1" y="624" width="1.3" height="1"/><rect x="560.3" y="624" width="1.3" height="1"/><rect x="553.5" y="626" width="6" height="1"/></g>
<g fill="none" stroke="#b8b8b8" stroke-width="1.4"><path d="M595.5 619 V625.5 H585 M588 622.5 L585 625.5 L588 628.5"/></g>
<g fill="#c0c0c0"><circle cx="619" cy="624.5" r="1.1"/><circle cx="623" cy="624.5" r="1.1"/><circle cx="627" cy="624.5" r="1.1"/></g>
</svg>
</body></html>
